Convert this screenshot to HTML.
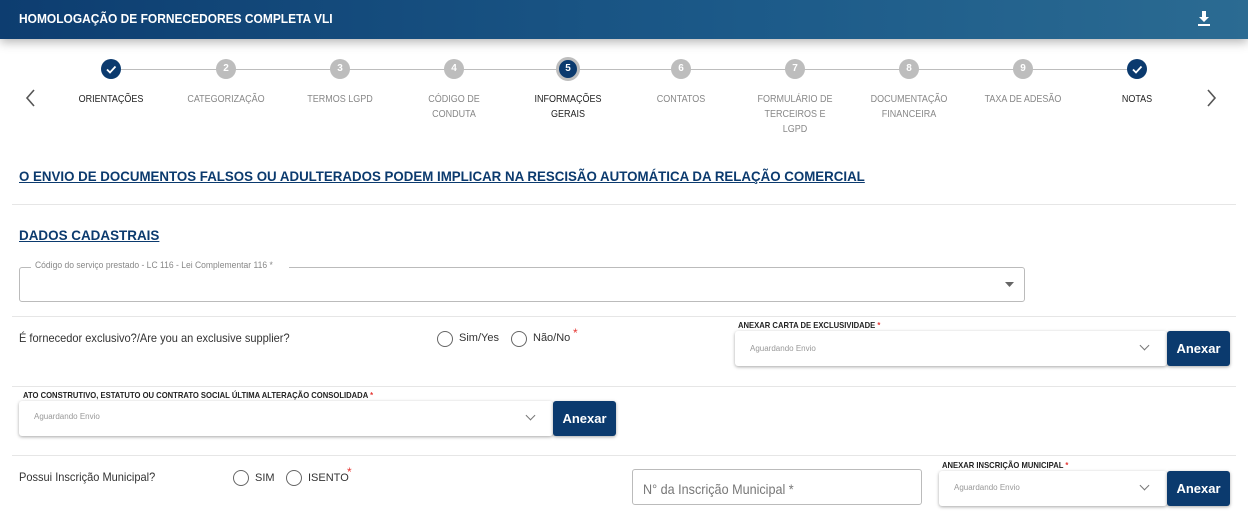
<!DOCTYPE html>
<html><head><meta charset="utf-8"><style>
*{margin:0;padding:0;box-sizing:border-box}
body{width:1248px;height:513px;overflow:hidden;background:#fff;font-family:"Liberation Sans",Arial,sans-serif;position:relative;color:#333}
.a{position:absolute;white-space:nowrap}
.hdr{position:absolute;left:0;top:0;width:1248px;height:39px;background:linear-gradient(90deg,#0d3d70,#1c5a89 60%,#2b6b92);box-shadow:0 3px 10px rgba(0,0,0,.3)}
.sx{display:inline-block;transform-origin:left center}
.c{position:absolute;width:20px;height:20px;border-radius:50%;background:#bdbdbd;color:#fff;font-size:10px;font-weight:bold;text-align:center;line-height:20px}
.c.d{background:#0b3a6e}
.ln{position:absolute;top:69px;height:1px;background:#bdbdbd}
.lbl{position:absolute;top:92px;width:110px;text-align:center;font-size:10px;line-height:15px;color:#888;transform:scaleX(.9)}
.lbl.k{color:#222}
.hr{position:absolute;left:12px;width:1224px;height:1px;background:#e6e6e6}
.link{color:#0b3a6e;font-weight:bold;font-size:14px}
.link .sx{text-decoration:underline}
.box{position:absolute;background:#fff;border-radius:3px;box-shadow:0 1px 3px rgba(0,0,0,.35)}
.btn{position:absolute;background:#0b3a6e;color:#fff;font-size:13px;font-weight:bold;text-align:center;line-height:35px;border-radius:3px;box-shadow:0 1px 3px rgba(0,0,0,.35)}
.ph{position:absolute;font-size:8px;color:#999;left:15px}
.cap{position:absolute;font-size:8.5px;font-weight:bold;color:#222}
.st{color:#e53935}
.r{position:absolute;width:16px;height:16px;border:1.5px solid #666;border-radius:50%}
.q{font-size:12px;color:#333}
.chev{position:absolute;width:7px;height:7px;border-right:1.5px solid #777;border-bottom:1.5px solid #777;transform:rotate(45deg)}
</style></head><body>
<div class="hdr"></div>
<div class="a" style="left:19px;top:11px;color:#fff;font-weight:bold;font-size:13px"><span class="sx" style="transform:scaleX(.92)">HOMOLOGAÇÃO DE FORNECEDORES COMPLETA VLI</span></div>
<svg class="a" style="left:1197px;top:11px" width="14" height="16" viewBox="0 0 14 16"><path d="M5 0h4v6h3L7 11 2 6h3z" fill="#fff"/><rect x="1" y="13" width="12" height="2" fill="#fff"/></svg>

<div class="ln" style="left:111px;width:1026px"></div>
<div class="c d" style="left:101px;top:59px"><svg width="20" height="20"><path d="M6 10.5l3 3 5.5-6" stroke="#fff" stroke-width="1.8" fill="none"/></svg></div>
<div class="c" style="left:216px;top:59px">2</div>
<div class="c" style="left:330px;top:59px">3</div>
<div class="c" style="left:444px;top:59px">4</div>
<div class="c d" style="left:556px;top:57px;width:24px;height:24px;line-height:18px;border:3px solid #bdbdbd">5</div>
<div class="c" style="left:671px;top:59px">6</div>
<div class="c" style="left:785px;top:59px">7</div>
<div class="c" style="left:899px;top:59px">8</div>
<div class="c" style="left:1013px;top:59px">9</div>
<div class="c d" style="left:1127px;top:59px"><svg width="20" height="20"><path d="M6 10.5l3 3 5.5-6" stroke="#fff" stroke-width="1.8" fill="none"/></svg></div>
<div class="lbl k" style="left:56px">ORIENTAÇÕES</div>
<div class="lbl" style="left:171px">CATEGORIZAÇÃO</div>
<div class="lbl" style="left:285px">TERMOS LGPD</div>
<div class="lbl" style="left:399px">CÓDIGO DE<br>CONDUTA</div>
<div class="lbl k" style="left:513px">INFORMAÇÕES<br>GERAIS</div>
<div class="lbl" style="left:626px">CONTATOS</div>
<div class="lbl" style="left:740px">FORMULÁRIO DE<br>TERCEIROS E<br>LGPD</div>
<div class="lbl" style="left:854px">DOCUMENTAÇÃO<br>FINANCEIRA</div>
<div class="lbl" style="left:968px">TAXA DE ADESÃO</div>
<div class="lbl k" style="left:1082px">NOTAS</div>
<svg class="a" style="left:24px;top:89px" width="12" height="18"><path d="M10 1L3 9l7 8" stroke="#555" stroke-width="1.6" fill="none"/></svg>
<svg class="a" style="left:1206px;top:89px" width="12" height="18"><path d="M2 1l7 8-7 8" stroke="#555" stroke-width="1.6" fill="none"/></svg>

<div class="a link" style="left:19px;top:168px"><span class="sx" style="transform:scaleX(.95)">O ENVIO DE DOCUMENTOS FALSOS OU ADULTERADOS PODEM IMPLICAR NA RESCISÃO AUTOMÁTICA DA RELAÇÃO COMERCIAL</span></div>
<div class="hr" style="top:204px"></div>
<div class="a link" style="left:19px;top:227px"><span class="sx" style="transform:scaleX(.96)">DADOS CADASTRAIS</span></div>

<div class="a" style="left:19px;top:267px;width:1006px;height:35px;border:1px solid #bbb;border-radius:3px"></div>
<div class="a" style="left:31px;top:260px;background:#fff;padding:0 4px;font-size:9px;color:#888"><span class="sx" style="transform:scaleX(.95)">Código do serviço prestado - LC 116 - Lei Complementar 116 *</span></div>
<svg class="a" style="left:1005px;top:282px" width="9" height="5"><path d="M0 0h9L4.5 5z" fill="#666"/></svg>

<div class="hr" style="top:316px"></div>
<div class="a q" style="left:19px;top:331px"><span class="sx" style="transform:scaleX(.92)">É fornecedor exclusivo?/Are you an exclusive supplier?</span></div>
<div class="r" style="left:437px;top:331px"></div>
<div class="a q" style="left:459px;top:332px;font-size:11px">Sim/Yes</div>
<div class="r" style="left:511px;top:331px"></div>
<div class="a q" style="left:533px;top:332px;font-size:11px">Não/No</div>
<div class="a st" style="left:573px;top:326px;font-size:12px">*</div>

<div class="cap" style="left:738px;top:320px"><span class="sx" style="transform:scaleX(.9)">ANEXAR CARTA DE EXCLUSIVIDADE <span class="st">*</span></span></div>
<div class="box" style="left:735px;top:331px;width:432px;height:35px"><div class="ph" style="top:13px">Aguardando Envio</div><div class="chev" style="left:406px;top:11px"></div></div>
<div class="btn" style="left:1167px;top:331px;width:63px">Anexar</div>

<div class="hr" style="top:386px"></div>
<div class="cap" style="left:23px;top:390px"><span class="sx" style="transform:scaleX(.9)">ATO CONSTRUTIVO, ESTATUTO OU CONTRATO SOCIAL ÚLTIMA ALTERAÇÃO CONSOLIDADA <span class="st">*</span></span></div>
<div class="box" style="left:19px;top:401px;width:534px;height:35px"><div class="ph" style="top:11px">Aguardando Envio</div><div class="chev" style="left:508px;top:11px"></div></div>
<div class="btn" style="left:553px;top:401px;width:63px">Anexar</div>

<div class="hr" style="top:455px"></div>
<div class="a q" style="left:19px;top:470px"><span class="sx" style="transform:scaleX(.92)">Possui Inscrição Municipal?</span></div>
<div class="r" style="left:233px;top:470px"></div>
<div class="a q" style="left:255px;top:472px;font-size:11px">SIM</div>
<div class="r" style="left:286px;top:470px"></div>
<div class="a q" style="left:308px;top:472px;font-size:11px">ISENTO</div>
<div class="a st" style="left:347px;top:465px;font-size:12px">*</div>

<div class="a" style="left:632px;top:469px;width:290px;height:36px;border:1px solid #bbb;border-radius:3px"></div>
<div class="a" style="left:643px;top:481px;font-size:14px;color:#777"><span class="sx" style="transform:scaleX(.9)">N° da Inscrição Municipal *</span></div>

<div class="cap" style="left:942px;top:460px"><span class="sx" style="transform:scaleX(.9)">ANEXAR INSCRIÇÃO MUNICIPAL <span class="st">*</span></span></div>
<div class="box" style="left:939px;top:471px;width:228px;height:35px"><div class="ph" style="top:12px">Aguardando Envio</div><div class="chev" style="left:202px;top:11px"></div></div>
<div class="btn" style="left:1167px;top:471px;width:63px">Anexar</div>
</body></html>
